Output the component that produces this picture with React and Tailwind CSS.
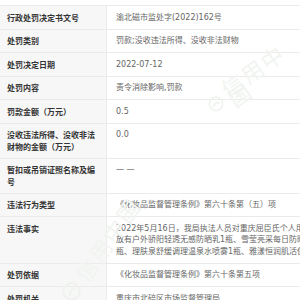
const rows = [
  { label: "行政处罚决定书文号", value: ["渝北磁市监处字(2022)162号"] },
  { label: "处罚类别", value: ["罚款;没收违法所得、没收非法财物"] },
  { label: "处罚决定日期", value: ["2022-07-12"] },
  { label: "处罚内容", value: ["责令消除影响,罚款"] },
  { label: "罚款金额（万元）", value: ["0.5"] },
  { label: "没收违法所得、没收非法财物的金额（万元）", value: ["0.0"] },
  { label: "暂扣或吊销证照名称及编号", value: ["— —"] },
  { label: "违法行为类型", value: ["《化妆品监督管理条例》第六十条第（五）项"] },
  {
    label: "违法事实",
    value: [
      "2022年5月16日，我局执法人员对重庆屈臣氏个人用品商店有限公司北碚分店进行检查，发现其货架上摆",
      "放有户外骄阳轻透无感防晒乳1瓶、雪莹亮采每日防晒隔离乳1瓶、安热沙水能户外防晒露1",
      "瓶、理肤泉舒缓调理温泉水喷雾1瓶、雅漾恒润肌活保湿喷雾1瓶等化妆品",
    ],
  },
  { label: "处罚依据", value: ["《化妆品监督管理条例》第六十条第五项"] },
  { label: "处罚机关", value: ["重庆市北碚区市场监督管理局"] },
];

// faint "信用中国" watermark lying over the table
const Watermark = ({ className }) => (
  <div
    className={`pointer-events-none absolute flex items-center gap-[5px] text-[#f1f4f0] ${className}`}
  >
    <svg width="20" height="20" viewBox="0 0 22 22">
      <circle cx="11" cy="11" r="9" fill="none" stroke="#eef2ed" strokeWidth="2" />
      <path d="M6 13c2-4 8-4 10 0" fill="none" stroke="#eef2ed" strokeWidth="2" />
    </svg>
    <span className="text-[22px] tracking-[2px]">信用中国</span>
  </div>
);

export default function App() {
  return (
    <div className="relative h-[300px] w-[300px] overflow-hidden bg-white pt-[5px] font-['Noto_Sans_CJK_SC','Noto_Sans',sans-serif] text-[8px] leading-[11.5px]">
      <div className="w-[640px] border-t border-[#ebebeb]">
        {rows.map((row) => (
          <div key={row.label} className="flex border-b border-[#ebebeb]">
            <div className="w-[107px] shrink-0 border-r border-[#ebebeb] bg-[#f7f7f7] py-[5.5px] pl-[7px] pr-[8px] font-bold text-[#333]">
              {row.label}
            </div>
            <div className="py-[5.5px] pl-[9px] font-['DejaVu_Sans','Noto_Sans_CJK_SC',sans-serif] text-[#666]">
              {row.value.map((line) => (
                <div key={line} className="whitespace-nowrap">
                  {line}
                </div>
              ))}
            </div>
          </div>
        ))}
      </div>
      <Watermark className="left-[200px] top-[68px] -rotate-[35deg]" />
      <Watermark className="left-[40px] top-[240px] -rotate-[55deg]" />
    </div>
  );
}
